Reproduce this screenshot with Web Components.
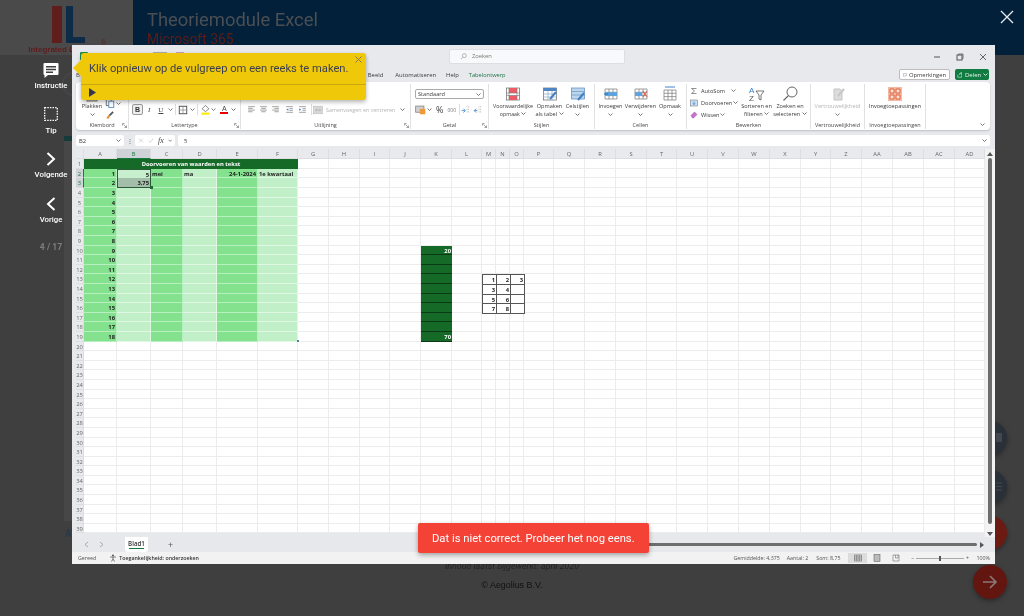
<!DOCTYPE html>
<html lang="nl">
<head>
<meta charset="utf-8">
<title>Theoriemodule Excel</title>
<style>
html, body { margin: 0; height: 616px; overflow: hidden; background: #3f3f40; }
body { position: relative; font-family: Roboto, "Liberation Sans", sans-serif; filter: blur(.35px); }
</style>
</head>
<body>
<page-backdrop></page-backdrop>
<side-nav></side-nav>
<excel-window></excel-window>
<coach-tip>Klik opnieuw op de vulgreep om een reeks te maken.</coach-tip>
<error-toast>Dat is niet correct. Probeer het nog eens.</error-toast>

<script>
// small inline svg helper, everything is drawn on a 16 box unless a size is given
const svg = (size, body, extra = "") => `<svg width="${size}" height="${size}" viewBox="0 0 16 16" fill="none" ${extra}>${body}</svg>`;
const caret = `<svg class="caret" width="5" height="3" viewBox="0 0 5 3"><path d="M.5.5 2.5 2.5 4.5.5" stroke="#555" stroke-width=".8" fill="none"/></svg>`;

const icons = {
    clipboard: svg(16, `<rect x="3" y="3" width="10" height="12" fill="#d9d2c4" stroke="#777"/><rect x="6" y="1" width="4" height="3" fill="#888"/>`),
    copy: svg(10, `<rect x="2" y="2" width="8" height="10" fill="#fff" stroke="#666" stroke-width="1.4"/><rect x="6" y="5" width="8" height="10" fill="#fff" stroke="#4f86c6" stroke-width="1.4"/>`),
    brush: svg(10, `<path d="M12 2 14 4 8 10 6 8Z" fill="#555"/><path d="M6 8 8 10 6 14 2 13 4 10Z" fill="#e5913a"/>`),
    borders: svg(10, `<rect x="2" y="2" width="12" height="12" stroke="#444" stroke-width="1.4"/><path d="M8 2v12M2 8h12" stroke="#777"/>`),
    fill: svg(11, `<path d="M8 2 13 7 8 11 3 7Z" fill="#fff" stroke="#555"/><rect x="2" y="12.5" width="12" height="3" fill="#ffe900"/>`),
    fontColor: `<span class="font-a">A</span>`,
    merge: svg(10, `<rect x="1" y="2" width="14" height="12" fill="#d8d8d8" stroke="#bdbdbd"/><path d="M4 8h8M4 8l2-2M4 8l2 2M12 8l-2-2M12 8l-2 2" stroke="#aaa"/>`),
    alignL: svg(9, `<path d="M2 3h12M2 6h8M2 9h12M2 12h8" stroke="#777" stroke-width="1.2"/>`),
    alignC: svg(9, `<path d="M2 3h12M4 6h8M2 9h12M4 12h8" stroke="#777" stroke-width="1.2"/>`),
    alignR: svg(9, `<path d="M2 3h12M6 6h8M2 9h12M6 12h8" stroke="#777" stroke-width="1.2"/>`),
    indentL: svg(9, `<path d="M2 3h12M8 6.5h6M8 9.5h6M2 13h12" stroke="#777" stroke-width="1.2"/><path d="M6 6v4L2 8Z" fill="#3f86cf"/>`),
    indentR: svg(9, `<path d="M2 3h12M8 6.5h6M8 9.5h6M2 13h12" stroke="#777" stroke-width="1.2"/><path d="M2 6v4L6 8Z" fill="#3f86cf"/>`),
    currency: svg(11, `<rect x="1" y="3" width="12" height="9" fill="#cfcfcf" stroke="#777"/><rect x="7" y="7" width="8" height="8" fill="#ee9a3a"/>`),
    incDec: svg(10, `<path d="M9 3h5M9 7h5M9 11h5" stroke="#888" stroke-dasharray="1.4 1"/><path d="M1 9h5M4 6l3 3-3 3" stroke="#3f86cf" stroke-width="1.4"/>`),
    decDec: svg(10, `<path d="M9 3h5M9 7h5M9 11h5" stroke="#888" stroke-dasharray="1.4 1"/><path d="M7 9H2M5 6 2 9l3 3" stroke="#3f86cf" stroke-width="1.4"/>`),
    condFormat: svg(16, `<rect x="1.5" y="2" width="13" height="12" fill="#fff" stroke="#666" stroke-width=".7"/><rect x="4" y="2" width="8" height="5" fill="#ef5b64"/><rect x="4" y="9.5" width="8" height="4.5" fill="#ef5b64"/><path d="M1.5 7h13M1.5 9.5h13M4 2v12M12 2v12" stroke="#777" stroke-width=".6"/>`),
    asTable: svg(16, `<rect x="1.5" y="2" width="13" height="12" fill="#fff" stroke="#666" stroke-width=".7"/><rect x="1.5" y="2" width="13" height="3" fill="#4f86c6"/><path d="M1.5 8h13M1.5 11h13M6 5v9M10 5v9" stroke="#8aa8c8" stroke-width=".7"/><path d="M14 6 8 13" stroke="#3f7fc2" stroke-width="2"/>`),
    cellStyles: svg(16, `<rect x="1.5" y="2" width="13" height="11" fill="#bcd6ee" stroke="#5b8bbd" stroke-width=".7"/><path d="M1.5 5.5h13M1.5 9h13" stroke="#5b8bbd" stroke-width=".6"/><path d="M14 7 8 14" stroke="#3f7fc2" stroke-width="2"/>`),
    insert: svg(16, `<path d="M2 3h12v10H2ZM2 6.3h12M2 9.6h12M6 3v10M10 3v10" stroke="#777" stroke-width=".7"/><rect x="2" y="6.3" width="12" height="3.4" fill="#55a4e6"/><path d="M5 8H1" stroke="#1d6fb8"/>`),
    remove: svg(16, `<path d="M2 3h12v10H2ZM2 6.3h12M2 9.6h12M6 3v10M10 3v10" stroke="#777" stroke-width=".7"/><rect x="2" y="6.3" width="7" height="3.4" fill="#55a4e6"/><path d="m10 5 4 6M14 5l-4 6" stroke="#e2574c"/>`),
    format: svg(16, `<path d="M3 1h10" stroke="#3f86cf"/><path d="M2 4h12v10H2ZM2 7.3h12M2 10.6h12M6 4v10M10 4v10" stroke="#777" stroke-width=".7"/>`),
    sigma: svg(8, `<path d="M13 3H3l6 5-6 5h10" stroke="#555" stroke-width="1.3"/>`),
    fillDown: svg(8, `<rect x="1" y="2" width="14" height="12" fill="#cfe2f5" stroke="#666"/><path d="M8 5v6M5 8.5 8 11l3-2.5" stroke="#2f7fcf" stroke-width="1.4"/>`),
    eraser: svg(8, `<path d="M2 9 9 2l5 5-7 7H5Z" fill="#c973c9" stroke="#8e4b9a"/>`),
    search: svg(16, `<circle cx="10" cy="6" r="5" stroke="#666"/><path d="M6.5 9.5 1.5 14.5" stroke="#666" stroke-width="1.1"/>`),
    sens: svg(16, `<path d="M4 3h6l2 2v9H4Z" fill="#dcdcdc" stroke="#c4c4c4"/><path d="M14 3 8 10" stroke="#c8c8c8" stroke-width="2.2"/>`),
    addins: svg(16, `<rect x="1" y="1" width="14" height="14" fill="#f4b9a3"/><path d="M3 3h4v4H3ZM9 3h4v4H9ZM3 9h4v4H3ZM9 9h4v4H9Z" stroke="#e0623c" fill="#fbe3da"/>`),
    launcher: `<svg width="5" height="5" viewBox="0 0 5 5" fill="none"><path d="M.5 2.5V.5h2M1.5 1.5l3 3M4.5 2.5v2h-2" stroke="#666" stroke-width=".6"/></svg>`
};

const sharedText = `font-family: "Open Sans", "Liberation Sans", sans-serif; color: #3a3a3a;`;

// --- things behind the window ---
class PageBackdrop extends HTMLElement {
    constructor() {
        super();
        this.attachShadow({ mode: "open" });
        this.shadowRoot.innerHTML = `
<style>
:host { display: flex; flex-direction: column; height: 616px; }
header { display: flex; height: 55px; background: #02203a; }
.logo { width: 133px; background: #4a4a4b; display: flex; flex-direction: column; align-items: center; position: relative; }
.logo svg { margin: 6px 0 0 5px; }
.logo b { font: bold 8px "Liberation Sans", sans-serif; color: #5f1d1b; margin: 2px 0 0 -2px; white-space: nowrap; }
.logo i { position: absolute; left: 101px; top: 39px; font: 7px "Liberation Sans"; color: #5f1d1b; }
.titles { padding: 9px 0 0 14px; flex: 1; }
h1 { margin: 0; font: 400 18.4px/21px Roboto, sans-serif; color: #4b4f53; }
h2 { margin: 0; font: 400 13.9px/18px Roboto, sans-serif; color: #5c1c1a; }
.close { margin: 10px 10px 0 0; }
main { flex: 1; position: relative; }
.strip { position: absolute; left: 64px; top: 81px; width: 12px; height: 385px; background: #474748; border-top: 5px solid #143a3a; box-sizing: border-box; }
.ring { position: absolute; left: 62px; top: 17px; width: 24px; height: 24px; box-sizing: border-box; border: 1px solid #4d4d4e; border-radius: 50%; }
.av { position: absolute; left: 65px; top: 473px; font: 10px Roboto, sans-serif; color: #20364c; }
footer { text-align: center; margin-bottom: 24px; }
footer em { display: block; font: italic 8.9px/12px Roboto, sans-serif; color: #232323; margin-bottom: 7px; }
footer span { font: 8.9px/13px "Liberation Sans", sans-serif; color: #111; display: block; }
.fab { position: absolute; left: 973px; width: 34px; height: 34px; border-radius: 50%; box-shadow: 0 2px 5px rgba(0,0,0,.35); display: flex; align-items: center; justify-content: center; }
.fab .hint { position: absolute; left: 23px; top: 12px; width: 6px; height: 9px; }
</style>
<header>
  <div class="logo">
    <svg width="34" height="37" viewBox="0 0 34 37"><rect x="0" y="0" width="10" height="37" fill="#5f1d1b"/><path d="M14 0h7v31h12v6H14Z" fill="#0e2b47"/></svg>
    <b>Integrated Learning</b><i>®</i>
  </div>
  <div class="titles"><h1>Theoriemodule Excel</h1><h2>Microsoft 365</h2></div>
  <svg class="close" width="14" height="14" viewBox="0 0 14 14"><path d="M1 1l12 12M13 1 1 13" stroke="#e9ecef" stroke-width="1.3"/></svg>
</header>
<main>
  <div class="strip"></div>
  <div class="ring"></div>
  <div class="av">AV</div>
  <div class="fab" style="top:366px;background:#2a3038"><svg class="hint" viewBox="0 0 6 9"><rect x="0" y="0" width="6" height="9" rx="1" fill="#434850"/></svg></div>
  <div class="fab" style="top:415px;background:#2a3038"><svg class="hint" viewBox="0 0 6 9"><path d="M0 1h6M0 4.500h6M0 8h6" stroke="#434850" stroke-width="1.200"/></svg></div>
  <div class="fab" style="top:461px;background:#6d1a12"></div>
  <div class="fab" style="top:510px;background:#631610">
    <svg width="16" height="16" viewBox="0 0 16 16" fill="none"><path d="M1 8h13M8 2l6 6-6 6" stroke="#8a7a78" stroke-width="1.6"/></svg>
  </div>
</main>
<footer><em>Inhoud laatst bijgewerkt: april 2020</em><span>© Aegolius B.V.</span></footer>`;
    }
}

class NavItem extends HTMLElement {
    constructor() {
        super();
        this.attachShadow({ mode: "open" });
        this.shadowRoot.innerHTML = `
<style>
:host { display: flex; flex-direction: column; align-items: center; height: 44.700px; }
.icon { height: 19px; display: flex; align-items: center; }
.label { font: 500 7.800px/11px Roboto, sans-serif; color: #fff; margin-top: 1px; }
</style>
<div class="icon"><slot name="icon"></slot></div>
<div class="label"><slot></slot></div>`;
    }
}

class SideNav extends HTMLElement {
    constructor() {
        super();
        this.attachShadow({ mode: "open" });
        this.shadowRoot.innerHTML = `
<style>
:host { position: absolute; left: 25px; top: 60px; width: 52px; display: flex; flex-direction: column; }
.count { font: 700 8.6px/11px Roboto, sans-serif; color: #7e7e7e; text-align: center; margin-top: 3px; }
</style>
<nav-item><svg slot="icon" width="16" height="16" viewBox="0 0 16 16"><path d="M1.500 1h13a1 1 0 0 1 1 1v10a1 1 0 0 1-1 1H5l-3.500 3v-3a1 1 0 0 1-1-1V2a1 1 0 0 1 1-1Z" fill="#fff"/><path d="M3 4h10v1.500H3ZM3 6.700h10v1.500H3ZM3 9.400h7v1.500H3Z" fill="#3f3f40"/></svg>Instructie</nav-item>
<nav-item><svg slot="icon" width="14" height="14" viewBox="0 0 14 14"><rect x=".7" y=".7" width="12.600" height="12.600" fill="none" stroke="#fff" stroke-width="1.300" stroke-dasharray="1.500 1.100"/></svg>Tip</nav-item>
<nav-item><svg slot="icon" width="10" height="14" viewBox="0 0 10 14"><path d="M1.500 1 8 7l-6.500 6" fill="none" stroke="#fff" stroke-width="2"/></svg>Volgende</nav-item>
<nav-item><svg slot="icon" width="10" height="14" viewBox="0 0 10 14"><path d="M8.500 1 2 7l6.500 6" fill="none" stroke="#fff" stroke-width="2"/></svg>Vorige</nav-item>
<div class="count">4 / 17</div>`;
    }
}

// --- excel parts ---
class RibbonGroup extends HTMLElement {
    constructor() {
        super();
        this.attachShadow({ mode: "open" });
        this.shadowRoot.innerHTML = `
<style>
:host { display: flex; flex-direction: column; width: var(--w); box-sizing: border-box; height: 45px; margin-top: 2px; border-right: 1px solid #e1e1e1; position: relative; flex: none; }
.content { flex: 1; display: flex; min-height: 0; }
.label { ${sharedText} font-size: 5.5px; line-height: 8px; text-align: center; color: #4a4a4a; }
.launch { position: absolute; right: 1px; bottom: 1px; line-height: 0; }
</style>
<div class="content"><slot></slot></div>
<div class="label" id="label"></div>
<div class="launch" id="launch"></div>`;
    }
    connectedCallback() {
        this.shadowRoot.querySelector("#label").textContent = this.getAttribute("label");
        if (this.hasAttribute("launcher")) this.shadowRoot.querySelector("#launch").innerHTML = icons.launcher;
    }
}

class ExcelRibbon extends HTMLElement {
    constructor() {
        super();
        this.attachShadow({ mode: "open" });
        this.shadowRoot.innerHTML = `
<style>
:host { display: flex; margin: 0 5px 0 4px; height: 48px; background: #fff; border-radius: 4px; box-shadow: 0 1px 2px rgba(0,0,0,.18); ${sharedText} font-size: 5.6px; line-height: 8px; position: relative; }
.row { display: flex; align-items: center; margin-top: 19.500px; height: 12px; }
.row > * { flex: none; }
.big { display: flex; flex-direction: column; align-items: center; text-align: center; white-space: nowrap; flex: none; }
.big > svg:not(.caret) { margin-top: 2px; }
.big > .caret { margin-top: 2.500px; }
.big span .caret { vertical-align: 1px; }
.bigs { display: flex; gap: 4px; margin-left: 4px; }
.stack { display: flex; flex-direction: column; gap: 4.500px; margin: 3px 0 0 3px; width: 52px; flex: none; }
.stack div { display: flex; align-items: center; height: 7.500px; white-space: nowrap; }
.stack svg:first-child { margin-right: 3px; }
.caret { flex: none; }
.b { width: 11px; height: 11px; box-sizing: border-box; border: 1px solid #9a9a9a; border-radius: 2px; background: #eee; font: bold 7px/9px "Liberation Sans"; text-align: center; color: #333; }
.t { font: 7px "Liberation Serif", serif; color: #444; }
.font-a { font: 7px/7px "Liberation Sans"; color: #444; border-bottom: 2px solid #e40000; display: inline-block; width: 8px; text-align: center; }
.sel { width: 69px; height: 10px; box-sizing: border-box; border: 1px solid #aaa; border-radius: 2px; display: flex; align-items: center; justify-content: space-between; padding: 0 2px; margin-top: 5px; }
.sep { width: 1px; height: 11px; background: #ddd; }
.more { position: absolute; right: 5px; bottom: 4px; line-height: 0; }
.off { color: #b4b4b4; }
</style>
<ribbon-group label="Klembord" launcher style="--w:53px">
  <div class="big" style="margin-left:6px;width:20px">${icons.clipboard}<span>Plakken</span>${caret}</div>
  <div style="display:flex;flex-direction:column;gap:2px;margin:14px 0 0 3px">
    <div style="display:flex;align-items:center;gap:1px">${icons.copy}${caret}</div>${icons.brush}
  </div>
</ribbon-group>
<ribbon-group label="Lettertype" launcher style="--w:112px">
  <div class="row" style="margin-left:3px">
    <span class="b">B</span>
    <span class="t" style="margin-left:5px"><i>I</i></span>
    <span class="t" style="margin-left:8px;text-decoration:underline">U</span>
    <span style="margin-left:5px;line-height:0">${caret}</span>
    <span class="sep" style="margin-left:2px"></span>
    <span style="margin-left:1.500px;line-height:0">${icons.borders}</span>
    <span style="margin-left:2px;line-height:0">${caret}</span>
    <span class="sep" style="margin-left:2px"></span>
    <span style="margin-left:2px;line-height:0">${icons.fill}</span>
    <span style="margin-left:.5px;line-height:0">${caret}</span>
    <span style="margin-left:4px">${icons.fontColor}</span>
    <span style="margin-left:2.500px;line-height:0">${caret}</span>
  </div>
</ribbon-group>
<ribbon-group label="Uitlijning" launcher style="--w:170px">
  <div class="row">
    <span style="margin-left:5.500px;line-height:0">${icons.alignL}</span>
    <span style="margin-left:3px;line-height:0">${icons.alignC}</span>
    <span style="margin-left:3px;line-height:0">${icons.alignR}</span>
    <span style="margin-left:5px;line-height:0">${icons.indentL}</span>
    <span style="margin-left:4px;line-height:0">${icons.indentR}</span>
    <span class="sep" style="margin-left:4.500px"></span>
    <span style="margin-left:1px;line-height:0">${icons.merge}</span>
    <span class="off" style="margin-left:3px;font-size:5.400px;white-space:nowrap">Samenvoegen en centreren</span>
    <span style="margin-left:5px;line-height:0">${caret}</span>
  </div>
</ribbon-group>
<ribbon-group label="Getal" launcher style="--w:78px">
  <div style="margin-left:4px">
    <div class="sel"><span>Standaard</span>${caret}</div>
    <div class="row" style="margin-top:4.500px">
      <span style="margin-left:-.5px;line-height:0">${icons.currency}</span>
      <span style="margin-left:1px;line-height:0">${caret}</span>
      <span style="margin-left:4.500px;font-size:9px">%</span>
      <span style="margin-left:4px;font-size:5px;color:#777">000</span>
      <span class="sep" style="margin-left:2.500px"></span>
      <span style="margin-left:1px;line-height:0">${icons.incDec}</span>
      <span style="margin-left:2px;line-height:0">${icons.decDec}</span>
    </div>
  </div>
</ribbon-group>
<ribbon-group label="Stijlen" style="--w:106px">
  <div class="bigs">
    <div class="big" style="width:40px;font-size:5.300px">${icons.condFormat}<span>Voorwaardelijke</span><span>opmaak ${caret}</span></div>
    <div class="big" style="width:25px">${icons.asTable}<span>Opmaken</span><span>als tabel ${caret}</span></div>
    <div class="big" style="width:23px">${icons.cellStyles}<span>Celstijlen</span>${caret}</div>
  </div>
</ribbon-group>
<ribbon-group label="Cellen" style="--w:92px">
  <div class="bigs">
    <div class="big" style="width:23px">${icons.insert}<span>Invoegen</span>${caret}</div>
    <div class="big" style="width:29px">${icons.remove}<span>Verwijderen</span>${caret}</div>
    <div class="big" style="width:22px">${icons.format}<span>Opmaak</span>${caret}</div>
  </div>
</ribbon-group>
<ribbon-group label="Bewerken" style="--w:124px">
  <div class="stack"><div>${icons.sigma}<span>AutoSom</span><span style="width:6px"></span>${caret}</div><div>${icons.fillDown}<span>Doorvoeren</span><span style="width:1px"></span>${caret}</div><div>${icons.eraser}<span>Wissen</span><span style="width:1px"></span>${caret}</div></div>
  <div class="big" style="width:29px"><svg width="16" height="16" viewBox="0 0 16 16" fill="none"><text x="0" y="7" font-size="8" font-family="Liberation Sans" fill="#2f7fcf">A</text><text x="0" y="15" font-size="8" font-family="Liberation Sans" fill="#555">Z</text><path d="M7 5h8l-3 4v5l-2-1V9Z" stroke="#555" stroke-width=".8"/></svg><span>Sorteren en</span><span>filteren ${caret}</span></div>
  <div class="big" style="margin-left:4px;width:30px">${icons.search}<span>Zoeken en</span><span>selecteren ${caret}</span></div>
</ribbon-group>
<ribbon-group label="Vertrouwelijkheid" style="--w:54px">
  <div class="big off" style="width:100%">${icons.sens}<span>Vertrouwelijkheid</span>${caret}</div>
</ribbon-group>
<ribbon-group label="Invoegtoepassingen" style="--w:61px">
  <div class="big" style="width:100%">${icons.addins}<span>Invoegtoepassingen</span></div>
</ribbon-group>
<div class="more">${caret}</div>`;
    }
}

const COL_WIDTHS = [33, 34, 32, 34, 41, 40, 31, 31, 30, 31, 31, 30, 14, 14, 14, 30, 31, 31, 31, 30, 31, 31, 31, 31, 30, 31, 31, 31, 31, 30];
const COL_NAMES = "A B C D E F G H I J K L M N O P Q R S T U V W X Y Z AA AB AC AD".split(" ");
const ROWS = 39;

class ExcelSheet extends HTMLElement {
    constructor() {
        super();
        this.attachShadow({ mode: "open" });
        const sheetStyle = `
:host { display: block; height: 388px; overflow: hidden; ${sharedText} }
#grid { display: grid; grid-template-columns: 8px ${COL_WIDTHS.map(w => w + "px").join(" ")}; grid-template-rows: 10.300px repeat(${ROWS}, 9.600px); }
#grid > div { box-sizing: border-box; border-right: 1px solid #ececec; border-bottom: 1px solid #ececec; background: #fff; font: 5.800px/10.400px "Open Sans", "Liberation Sans", sans-serif; white-space: nowrap; overflow: hidden; padding: 0 1px; color: #1c1c1c; }
#grid > .head { background: #e8eaee; border-color: #dcdee2; text-align: center; color: #666; }
#grid > .rowhead { padding: 0; }
#grid > .selhead { background: #cfd3d8; color: #1a7a43; border-bottom: 1px solid #1a7a43; }
#grid > .selrow { background: #cfd3d8; color: #1a7a43; border-right: 1px solid #1a7a43; }
#grid > .title { background: #166a28; color: #fff; font-weight: 700; text-align: center; border: 0; }
#grid > .mid { background: #84e28f; border-color: #b8efc0; }
#grid > .light { background: #c1f0c8; border-color: #dff7e3; }
#grid > .num { text-align: right; font-weight: 700; }
#grid > .txt { font-weight: 700; }
#grid > .b2 { background: #c7efcd; border: 1px solid #2c5a38; border-bottom: 0; }
#grid > .b3 { background: #a3bfa9; border: 1px solid #2c5a38; border-top: 0; }
#grid > .dark { background: #166a28; border: 0; border-bottom: 1px solid #0c3a17; color: #fff; text-align: right; font-weight: 700; }
#grid > .box { border: 1px solid #555; margin: 0 -1px -1px 0; text-align: right; font-weight: 700; position: relative; z-index: 1; }
.wrap { position: relative; }
.handle { position: absolute; width: 3px; height: 3px; background: #1d6b35; z-index: 2; }
`;
        this.shadowRoot.innerHTML = `<style>${sheetStyle}</style><div class="wrap"><div id="grid"></div>
<div class="handle" style="left:74px;top:37px"></div>
<div class="handle" style="left:220.500px;top:190.500px;width:2px;height:2px;background:#5a7ab0"></div></div>`;
        this.setup();
    }

    setup() {
        const grid = this.shadowRoot.querySelector("#grid");
        const add = (cls, text = "", style = "") => {
            const cell = document.createElement("div");
            if (cls) cell.className = cls;
            if (text !== "") cell.textContent = text;
            if (style) cell.style.cssText = style;
            grid.append(cell);
        };
        // corner + column heads
        add("head");
        COL_NAMES.forEach(name => add(name === "B" ? "head selhead" : "head", name));

        const small = { 13: [1, 2, 3], 14: [3, 4, ""], 15: [5, 6, ""], 16: [7, 8, ""] };
        const row2 = { 1: "5", 2: "mei", 3: "ma", 4: "24-1-2024", 5: "1e kwartaal" };

        for (let r = 1; r <= ROWS; r++) {
            add(r === 2 || r === 3 ? "head rowhead selrow" : "head rowhead", r);
            if (r === 1) {
                add("title", "Doorvoeren van waarden en tekst", "grid-column: span 6");
                for (let c = 6; c < COL_NAMES.length; c++) add("");
                continue;
            }
            for (let c = 0; c < COL_NAMES.length; c++) {
                if (r <= 19 && c < 6) {
                    let cls = c % 2 ? "light" : "mid";
                    let text = "";
                    if (c === 0) { cls += " num"; text = r - 1; }
                    if (r === 2 && c > 0) {
                        text = row2[c];
                        cls += c === 1 || c === 4 ? " num" : " txt";
                    }
                    if (r === 2 && c === 1) cls += " b2";
                    if (r === 3 && c === 1) { cls += " b3 num"; text = "3,75"; }
                    add(cls, text);
                } else if (c === 10 && r >= 10 && r <= 19) {
                    add("dark", r === 10 ? "20" : r === 19 ? "70" : "");
                } else if (small[r] && c >= 12 && c <= 14) {
                    add("box", small[r][c - 12]);
                } else {
                    add("");
                }
            }
        }
    }
}

class ExcelWindow extends HTMLElement {
    constructor() {
        super();
        this.attachShadow({ mode: "open" });
        this.shadowRoot.innerHTML = `
<style>
:host { position: absolute; left: 72px; top: 45px; width: 923px; height: 519px; background: #e7e9ed; display: flex; flex-direction: column; overflow: hidden; ${sharedText} font-size: 5.800px; }
.titlebar { height: 22px; flex: none; display: flex; align-items: center; position: relative; }
.search { margin-left: 280px; width: 176px; height: 15px; box-sizing: border-box; background: #f8f9fa; border: 1px solid #dcdee2; border-radius: 2px; display: flex; align-items: center; gap: 5px; padding-left: 10px; color: #777; }
.winbtns { margin-left: auto; display: flex; gap: 15px; margin-right: 8px; align-items: center; margin-top: 1px; }
.xl { margin-left: 8px; width: 8px; height: 8px; background: #1e8e4e; border-radius: 1px; }
.quick { width: 16px; height: 8px; box-sizing: border-box; border: 1px solid #aaa; border-radius: 2px; margin-left: 64px; background: #f3f3f3; }
.pink { width: 8px; height: 8px; margin-left: 8px; background: #c79ac4; }
.tabs { height: 15px; flex: none; display: flex; align-items: center; font-size: 5.900px; padding-left: 4px; }
.tabs span { white-space: nowrap; }
.tabs .green { color: #217346; font-weight: 500; font-size: 5.700px; }
.cmt { margin-left: auto; height: 11px; box-sizing: border-box; background: #fff; border: 1px solid #bdbdbd; border-radius: 2px; padding: 0 3px; display: flex; align-items: center; gap: 2px; font-size: 5.800px; width: 51px; white-space: nowrap; }
.share { margin: 0 6px 0 5px; height: 11px; width: 34px; box-sizing: border-box; background: #107c41; color: #e9f6ee; border-radius: 2px; display: flex; align-items: center; gap: 2px; padding-left: 2px; font-size: 6px; }
.share .caret path { stroke: #fff; }
.fbar { height: 11px; flex: none; display: flex; gap: 3px; margin: 5px 5px 3px 4px; align-items: stretch; }
.fbar > div { background: #fff; border-radius: 2px; display: flex; align-items: center; box-sizing: border-box; padding: 0 3px; }
.name { width: 48px; justify-content: space-between; }
.dots { background: none !important; width: 5px; padding: 0 !important; justify-content: center; color: #555; }
.fx { width: 40px; gap: 4px; color: #999; }
.fx i { font: italic 8px "Liberation Serif", serif; color: #444; }
.input { flex: 1; justify-content: space-between; padding: 0 3px 0 6px !important; }
.sheetrow { height: 388px; flex: none; display: flex; padding-left: 4px; }
excel-sheet { width: 909px; flex: none; }
.vscroll { width: 10px; flex: none; background: #f3f3f3; display: flex; flex-direction: column; align-items: center; padding-top: 3px; box-sizing: border-box; }
.vscroll b { width: 4px; height: 366px; background: #6d6d6d; border-radius: 2px; margin-top: 2px; }
.vscroll svg { flex: none; }
.vscroll b + svg { margin-top: 8px; }
.sheetbar { height: 15px; flex: none; display: flex; align-items: center; background: #e6e8ec; padding-left: 12px; }
.sheetbar .tab { margin-left: 21px; width: 23px; height: 15px; box-sizing: border-box; background: #fff; border-radius: 0 0 3px 3px; text-align: center; font-size: 6.200px; font-weight: 600; line-height: 13px; color: #333; position: relative; }
.sheetbar .tab::after { content: ""; position: absolute; left: 4px; right: 4px; bottom: 3px; height: 1px; background: #107c41; }
.plus { margin-left: 20px; font-size: 9px; color: #555; }
.hscroll { margin-left: auto; width: 333px; height: 3px; background: #6d6d6d; border-radius: 2px; }
.hend { margin: 0 11px 0 3px; width: 0; height: 0; border-left: 4px solid #555; border-top: 3px solid transparent; border-bottom: 3px solid transparent; }
.status { flex: 1; display: flex; align-items: center; background: #f2f2f2; padding-left: 6px; font-size: 5.300px; color: #555; white-space: nowrap; }
.status b { font-weight: 600; color: #333; margin-left: 2px; }
.status .acc { margin-left: 13px; line-height: 0; }
.right { margin-left: auto; display: flex; align-items: center; height: 100%; margin-right: 5px; }
.view { width: 19px; height: 10px; display: flex; align-items: center; justify-content: center; }
.view.on { background: #dcdcdc; }
.slider { display: flex; align-items: center; gap: 2px; margin-left: 5.500px; color: #555; }
.track { width: 48px; height: 1px; background: #aaa; position: relative; }
.track::after { content: ""; position: absolute; left: 23px; top: -2px; width: 2px; height: 5px; background: #555; }
</style>
<div class="titlebar">
  <div class="xl"></div><div class="quick"></div><div class="pink"></div>
  <div class="search" style="margin-left:265px">${svg(7, `<circle cx="10" cy="6" r="4.500" stroke="#666"/><path d="M6.500 9.500 2 14" stroke="#666"/>`)}<span>Zoeken</span></div>
  <div class="winbtns">
    <svg width="8" height="8" viewBox="0 0 8 8"><path d="M1 4h6" stroke="#555"/></svg>
    <svg width="8" height="8" viewBox="0 0 8 8" fill="none"><rect x="1" y="2" width="5" height="5" stroke="#555"/><path d="M2.500 2V1H7v4.500H6" stroke="#555" stroke-width=".8"/></svg>
    <svg width="8" height="8" viewBox="0 0 8 8"><path d="m1 1 6 6M7 1 1 7" stroke="#555" stroke-width=".9"/></svg>
  </div>
</div>
<div class="tabs">
  <span>B</span>
  <span style="margin-left:288px">Beeld</span>
  <span style="margin-left:12px">Automatiseren</span>
  <span style="margin-left:10px">Help</span>
  <span class="green" style="margin-left:10px">Tabelontwerp</span>
  <div class="cmt">${svg(6, `<path d="M2 2h12v9H7l-3 3v-3H2Z" stroke="#555" stroke-width="1.300"/>`)}<span>Opmerkingen</span></div>
  <div class="share">${svg(6, `<path d="M2 7v7h10V9M6 8l3-4h-2l5-3v6L10 5" stroke="#fff" stroke-width="1.300"/>`)}<span>Delen</span>${caret}</div>
</div>
<excel-ribbon></excel-ribbon>
<div class="fbar">
  <div class="name"><span>B2</span>${caret}</div>
  <div class="dots">⋮</div>
  <div class="fx">${svg(7, `<path d="m3 3 10 10M13 3 3 13" stroke="#aaa" stroke-width="1.200"/>`)}${svg(7, `<path d="m2 9 4 4 8-10" stroke="#aaa" stroke-width="1.200"/>`)}<i>fx</i>${caret}</div>
  <div class="input"><span>5</span>${caret}</div>
</div>
<div class="sheetrow">
  <excel-sheet></excel-sheet>
  <div class="vscroll"><svg width="6" height="4" viewBox="0 0 6 4"><path d="M0 4h6L3 0Z" fill="#555"/></svg><b></b><svg width="6" height="4" viewBox="0 0 6 4"><path d="M0 0h6L3 4Z" fill="#555"/></svg></div>
</div>
<div class="sheetbar">
  <svg width="5" height="7" viewBox="0 0 5 7"><path d="M4 1 1 3.500 4 6" stroke="#999" fill="none" stroke-width=".8"/></svg>
  <svg style="margin-left:10px" width="5" height="7" viewBox="0 0 5 7"><path d="M1 1l3 2.500L1 6" stroke="#999" fill="none" stroke-width=".8"/></svg>
  <div class="tab">Blad1</div>
  <div class="plus">+</div>
  <div class="hscroll"></div><div class="hend"></div>
</div>
<div class="status">
  <span>Gereed</span>
  <span class="acc">${svg(8, `<circle cx="8" cy="3" r="2" fill="#555"/><path d="M2 6h12M8 6v4l-3 5M8 10l3 5" stroke="#555" stroke-width="1.500"/>`)}</span>
  <b>Toegankelijkheid: onderzoeken</b>
  <div class="right">
    <span style="margin-right:7px">Gemiddelde: 4,375</span><span style="margin-right:8px">Aantal: 2</span><span style="margin-right:8px">Som: 8,75</span>
    <div class="view on">${svg(8, `<path d="M1 2h14v12H1ZM1 6h14M1 10h14M5.500 2v12M10.500 2v12" stroke="#555"/>`)}</div>
    <div class="view">${svg(8, `<rect x="2" y="1" width="12" height="14" fill="#bbb" stroke="#555"/>`)}</div>
    <div class="view">${svg(8, `<path d="M2 2h12v12H2ZM7 2v6h5V2" stroke="#555"/>`)}</div>
    <div class="slider"><span>−</span><div class="track"></div><span>+</span><span style="margin-left:5.500px">100%</span></div>
  </div>
</div>`;
    }
}

class CoachTip extends HTMLElement {
    constructor() {
        super();
        this.attachShadow({ mode: "open" });
        this.shadowRoot.innerHTML = `
<style>
:host { position: absolute; left: 81px; top: 53px; width: 285px; height: 47px; background: #efc80a; border-radius: 3px; box-shadow: 0 2px 4px rgba(0,0,0,.3); display: flex; flex-direction: column; color: #3c3f52; }
:host::before { content: ""; position: absolute; left: -8px; top: 7px; border-right: 8px solid #efc80a; border-top: 8px solid transparent; border-bottom: 8px solid transparent; }
.text { height: 32px; box-sizing: border-box; padding: 8px 8px 0; font: 400 11.180px/15px Roboto, sans-serif; border-bottom: 1px solid #c9a70d; white-space: nowrap; }
.foot { flex: 1; display: flex; align-items: center; padding-left: 8px; }
.x { position: absolute; right: 4px; top: 3px; line-height: 0; }
</style>
<div class="text"><slot></slot></div>
<div class="foot"><svg width="7" height="9" viewBox="0 0 7 9"><path d="M0 0l7 4.500L0 9Z" fill="#33384c"/></svg></div>
<div class="x"><svg width="7" height="7" viewBox="0 0 7 7"><path d="m.5.5 6 6M6.500.5l-6 6" stroke="#7d7a55" stroke-width="1"/></svg></div>`;
    }
}

class ErrorToast extends HTMLElement {
    constructor() {
        super();
        this.attachShadow({ mode: "open" });
        this.shadowRoot.innerHTML = `
<style>
:host { position: absolute; left: 418px; top: 523px; width: 231px; height: 30px; box-sizing: border-box; background: #f44336; color: #fff; border-radius: 2px; box-shadow: 0 2px 5px rgba(0,0,0,.35); display: flex; align-items: center; padding-left: 14px; font: 400 11.230px Roboto, sans-serif; white-space: nowrap; }
</style><slot></slot>`;
    }
}

customElements.define("page-backdrop", PageBackdrop);
customElements.define("nav-item", NavItem);
customElements.define("side-nav", SideNav);
customElements.define("ribbon-group", RibbonGroup);
customElements.define("excel-ribbon", ExcelRibbon);
customElements.define("excel-sheet", ExcelSheet);
customElements.define("excel-window", ExcelWindow);
customElements.define("coach-tip", CoachTip);
customElements.define("error-toast", ErrorToast);
</script>
</body>
</html>
